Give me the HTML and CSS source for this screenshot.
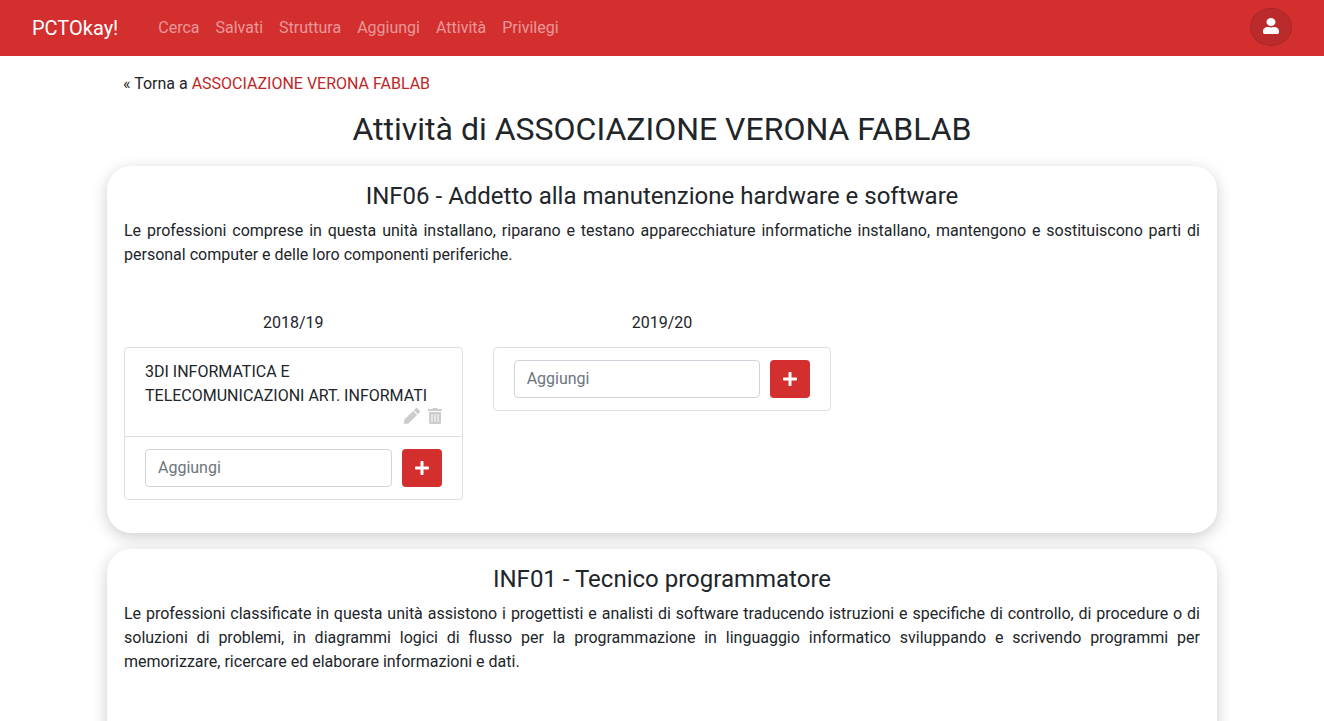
FILE: index.html

```html
<!DOCTYPE html>
<html lang="it">
<head>
    <meta charset="UTF-8">
    <meta name="viewport" content="width=device-width, initial-scale=1.0">
    <title>PCTOkay!</title>
    <link rel="stylesheet" href="styles.css">
</head>
<body>

<nav class="navbar">
    <a class="brand" href="#">PCTOkay!</a>
    <ul class="nav-links">
        <li><a href="#">Cerca</a></li>
        <li><a href="#">Salvati</a></li>
        <li><a href="#">Struttura</a></li>
        <li><a href="#">Aggiungi</a></li>
        <li><a href="#">Attività</a></li>
        <li><a href="#">Privilegi</a></li>
    </ul>
    <button class="user-btn" aria-label="Utente">
        <svg viewBox="0 0 448 512" width="16" height="16" preserveAspectRatio="none"><path fill="#fff" d="M224 256c70.700 0 128-57.300 128-128S294.700 0 224 0 96 57.300 96 128s57.300 128 128 128zm89.600 32h-16.700c-22.200 10.200-46.900 16-72.900 16s-50.600-5.800-72.900-16h-16.700C60.200 288 0 348.200 0 422.400V464c0 26.500 21.500 48 48 48h352c26.500 0 48-21.500 48-48v-41.600c0-74.200-60.200-134.400-134.400-134.400z"/></svg>
    </button>
</nav>

<main class="container">
    <p class="back">« Torna a <a href="#">ASSOCIAZIONE VERONA FABLAB</a></p>
    <h2 class="page-title">Attività di ASSOCIAZIONE VERONA FABLAB</h2>

    <!-- INF06 -->
    <section class="panel">
        <h4>INF06 - Addetto alla manutenzione hardware e software</h4>
        <p class="descr">Le professioni comprese in questa unità installano, riparano e testano apparecchiature informatiche installano, mantengono e sostituiscono parti di personal computer e delle loro componenti periferiche.</p>

        <div class="years">
            <div class="year">
                <div class="year-label">2018/19</div>
                <div class="box">
                    <div class="box-item">
                        3DI INFORMATICA E TELECOMUNICAZIONI ART. INFORMATI
                        <div class="item-actions">
                            <svg viewBox="0 0 512 512" width="16" height="16"><path fill="#ccc" d="M290.740 93.240l128.020 128.020-277.990 277.990-114.140 12.600C11.350 513.540-1.560 500.620.14 485.340l12.700-114.220 277.900-277.880zm207.200-19.060l-60.110-60.110c-18.750-18.750-49.160-18.750-67.910 0l-56.550 56.550 128.020 128.020 56.550-56.550c18.750-18.760 18.750-49.160 0-67.910z"/></svg>
                            <svg viewBox="0 0 448 512" width="14" height="16"><path fill="#ccc" d="M32 464a48 48 0 0 0 48 48h288a48 48 0 0 0 48-48V128H32zm272-256a16 16 0 0 1 32 0v224a16 16 0 0 1-32 0zm-96 0a16 16 0 0 1 32 0v224a16 16 0 0 1-32 0zm-96 0a16 16 0 0 1 32 0v224a16 16 0 0 1-32 0zM432 32H312l-9.400-18.700A24 24 0 0 0 281.100 0H166.800a23.720 23.720 0 0 0-21.400 13.300L136 32H16A16 16 0 0 0 0 48v32a16 16 0 0 0 16 16h416a16 16 0 0 0 16-16V48a16 16 0 0 0-16-16z"/></svg>
                        </div>
                    </div>
                    <div class="box-add">
                        <input type="text" placeholder="Aggiungi">
                        <button class="add-btn" aria-label="Aggiungi">
                            <svg viewBox="0 0 448 512" width="14" height="16"><path fill="#fff" d="M416 208H272V64c0-17.670-14.330-32-32-32h-32c-17.670 0-32 14.330-32 32v144H32c-17.670 0-32 14.330-32 32v32c0 17.670 14.330 32 32 32h144v144c0 17.670 14.330 32 32 32h32c17.670 0 32-14.330 32-32V304h144c17.670 0 32-14.330 32-32v-32c0-17.670-14.330-32-32-32z"/></svg>
                        </button>
                    </div>
                </div>
            </div>
            <div class="year">
                <div class="year-label">2019/20</div>
                <div class="box">
                    <div class="box-add">
                        <input type="text" placeholder="Aggiungi">
                        <button class="add-btn" aria-label="Aggiungi">
                            <svg viewBox="0 0 448 512" width="14" height="16"><path fill="#fff" d="M416 208H272V64c0-17.670-14.330-32-32-32h-32c-17.670 0-32 14.330-32 32v144H32c-17.670 0-32 14.330-32 32v32c0 17.670 14.330 32 32 32h144v144c0 17.670 14.330 32 32 32h32c17.670 0 32-14.330 32-32V304h144c17.670 0 32-14.330 32-32v-32c0-17.670-14.330-32-32-32z"/></svg>
                        </button>
                    </div>
                </div>
            </div>
        </div>
    </section>

    <!-- INF01 -->
    <section class="panel panel-tall">
        <h4>INF01 - Tecnico programmatore</h4>
        <p class="descr">Le professioni classificate in questa unità assistono i progettisti e analisti di software traducendo istruzioni e specifiche di controllo, di procedure o di soluzioni di problemi, in diagrammi logici di flusso per la programmazione in linguaggio informatico sviluppando e scrivendo programmi per memorizzare, ricercare ed elaborare informazioni e dati.</p>
    </section>
</main>

</body>
</html>
```

FILE: styles.css

```css
* { box-sizing: border-box; }
body { margin: 0; font-family: Roboto, sans-serif; font-size: 16px; line-height: 1.5; color: #212529; background-color: #fff; }
a { text-decoration: none; }

.navbar { display: flex; align-items: center; height: 56px; padding: 0 32px; background-color: #d32f2f; }
.brand { font-size: 20px; color: #fff; margin-right: 32px; }
.nav-links { display: flex; list-style: none; margin: 0; padding: 0; flex: 1; }
.nav-links a { display: block; padding: 8px; color: rgba(255, 255, 255, .5); }
.user-btn { display: flex; align-items: center; justify-content: center; width: 42px; height: 38px; padding: 0 0 2px; margin-bottom: 2px; border: 1px solid #a92828; border-radius: 50%; background-color: #bb2b2b; }

.container { width: 1140px; margin: 0 auto; padding: 0 15px; }
.back { margin: 16px 16px 0; }
.back a { color: #bf2626; }
.page-title { margin: 14px 0 18px; font-size: 32px; font-weight: 400; line-height: 1.2; text-align: center; }

.panel { padding: 16px 17px 33px; margin-bottom: 16px; border-radius: 24px; background-color: #fff; box-shadow: 0 4px 16px rgba(0, 0, 0, .2); }
.panel-tall { min-height: 260px; }
.panel h4 { margin: 0 0 8px; font-size: 24px; font-weight: 400; line-height: 1.2; text-align: center; }
.descr { margin: 0 0 16px; text-align: justify; }

.years { display: grid; grid-template-columns: repeat(3, 1fr); gap: 30px; padding-top: 28px; }
.year-label { margin-bottom: 12px; text-align: center; }
.box { border: 1px solid rgba(0, 0, 0, .125); border-radius: 4px; }
.box-item { padding: 12px 20px; border-bottom: 1px solid rgba(0, 0, 0, .125); }
.item-actions { display: flex; justify-content: flex-end; align-items: center; gap: 8px; height: 16px; }
.box-add { display: flex; gap: 10px; padding: 12px 20px; }
.box-add input { flex: 1; min-width: 0; height: 38px; padding: 5px 12px 7px; border: 1px solid #ced4da; border-radius: 4px; font-family: inherit; font-size: 16px; color: #495057; }
.box-add input::placeholder { color: #6c757d; }
.add-btn { display: flex; align-items: center; justify-content: center; width: 40px; height: 38px; padding: 0; border: 0; border-radius: 4px; background-color: #d32f2f; }
```
